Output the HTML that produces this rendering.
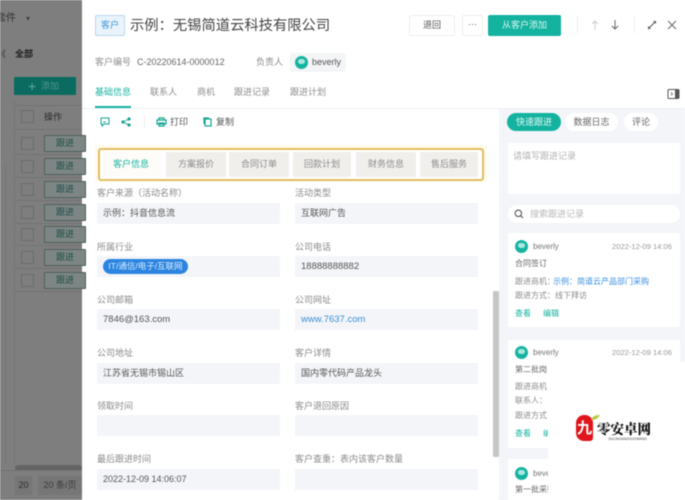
<!DOCTYPE html>
<html lang="zh"><head><meta charset="utf-8">
<style>
html,body{margin:0;padding:0;background:#fff}
#p{position:relative;width:685px;height:500px;overflow:hidden;background:#fff;font:9px/12px "Liberation Sans","Noto Sans CJK SC",sans-serif;color:#555;filter:blur(.45px)}
#p div,#p span.a,#p svg{position:absolute}
.t{white-space:nowrap}
.lab{color:#8a8a8a;font-size:9px;line-height:12px;white-space:nowrap}
.box{background:#f4f5f8;width:183px;height:21px;line-height:21px;text-indent:6px;color:#555;white-space:nowrap}
.tab{top:152px;height:25px;line-height:25px;background:#f1efec;text-align:center;color:#8b8b8b;width:60px}
.cb{left:21px;width:11px;height:11px;border:1px solid #6b6b6b}
.gb{left:44px;width:40px;height:15px;border:1px solid #4f5f5b;background:#7d8684;color:#1f4f48;text-align:center;line-height:15px;border-radius:1px}
.hl{background:#727272;left:15px;width:67px;height:1px}
.card{left:508px;width:172px;background:#fff;border-radius:2px}
.av{width:13px;height:13px;border-radius:50%;background:#14b3a0}
.av:after{content:"";position:absolute;left:3px;top:3px;width:7px;height:5px;border-radius:3px;background:#a9e6de}
.g{color:#8d8d8d}.teal{color:#14b3a0}
.dt{font-size:7.6px;color:#999}
.s{font-size:8px}
</style></head><body>
<div id="p">
<!-- dimmed left -->
<div style="left:0;top:0;width:82px;height:500px;background:#7e7e7e"></div>
<div style="left:5px;top:165px;width:1px;height:300px;background:#767676"></div>
<div style="left:14px;top:100px;width:1px;height:365px;background:#747474"></div>
<div class="t" style="left:-4px;top:13px;font-size:10px;color:#333">套件</div>
<div class="t" style="left:26px;top:13px;font-size:8px;color:#444">▾</div>
<div class="t" style="left:-3px;top:48px;color:#333;font-size:9px">《</div>
<div class="t" style="left:15px;top:48px;color:#1c1c1c;font-size:9px;font-weight:bold">全部</div>
<div style="left:14px;top:77px;width:62px;height:18px;background:#0b6b60;border-radius:1px"></div>
<div class="t" style="left:28px;top:79px;color:#5fa69d;font-size:14px;line-height:14px">+</div>
<div class="t" style="left:41px;top:80px;color:#52958c;font-size:9px">添加</div>
<div class="hl" style="top:105px"></div>
<div class="cb" style="top:110px"></div>
<div class="t" style="left:44px;top:111px;color:#2a2a2a;font-size:9px">操作</div>
<div class="hl" style="top:129px"></div>
<div class="cb" style="top:137px"></div><div class="gb" style="top:135px">跟进</div><div class="hl" style="top:154px"></div>
<div class="cb" style="top:160px"></div><div class="gb" style="top:158px">跟进</div><div class="hl" style="top:177px"></div>
<div class="cb" style="top:183px"></div><div class="gb" style="top:181px">跟进</div><div class="hl" style="top:200px"></div>
<div class="cb" style="top:206px"></div><div class="gb" style="top:204px">跟进</div><div class="hl" style="top:223px"></div>
<div class="cb" style="top:228px"></div><div class="gb" style="top:226px">跟进</div><div class="hl" style="top:245px"></div>
<div class="cb" style="top:251px"></div><div class="gb" style="top:249px">跟进</div><div class="hl" style="top:268px"></div>
<div class="cb" style="top:274px"></div><div class="gb" style="top:272px">跟进</div><div class="hl" style="top:291px"></div>
<div style="left:15px;top:465px;width:67px;height:6px;border-radius:3px;background:#646464"></div>
<div style="left:0;top:470px;width:82px;height:1px;background:#727272"></div>
<div style="left:15px;top:476px;width:17px;height:19px;background:#767676;text-align:center;line-height:19px;color:#2c2c2c">20</div>
<div style="left:38px;top:476px;width:44px;height:19px;background:#767676;text-align:center;line-height:19px;color:#3a3a3a" class="t">20 条/页</div>

<!-- header -->
<div style="left:95px;top:15px;width:28px;height:19px;background:#e9f3fb;border:1px solid #bcd9f0;border-radius:2px;text-align:center;line-height:19px;color:#3e94d8;font-size:9px">客户</div>
<div class="t" style="left:130px;top:17px;font-size:14.3px;line-height:18px;color:#444">示例&#xFF1A;无锡简道云科技有限公司</div>
<div style="left:409px;top:15px;width:44px;height:19px;border:1px solid #eee;border-radius:2px;text-align:center;line-height:19px;color:#555">退回</div>
<div style="left:462px;top:15px;width:19px;height:19px;border:1px solid #eee;border-radius:2px;text-align:center;line-height:17px;color:#555">···</div>
<div style="left:488px;top:15px;width:73px;height:21px;background:#14b3a0;border-radius:2px;text-align:center;line-height:21px;color:#dff6f3">从客户添加</div>
<div style="left:577px;top:16px;width:1px;height:17px;background:#eee"></div>
<div style="left:634px;top:16px;width:1px;height:17px;background:#eee"></div>
<svg style="left:589px;top:19px" width="12" height="12" viewBox="0 0 12 12" fill="none" stroke="#ccc" stroke-width="1"><path d="M6 11V2M3 5l3-3 3 3"/></svg>
<svg style="left:609px;top:19px" width="12" height="12" viewBox="0 0 12 12" fill="none" stroke="#666" stroke-width="1"><path d="M6 1v9M3 7l3 3 3-3"/></svg>
<svg style="left:647px;top:20px" width="10" height="10" viewBox="0 0 10 10" fill="none" stroke="#555" stroke-width="1"><path d="M2 8l6-6"/><path d="M6 1h3v3M1 6v3h3" fill="#555" stroke="none"/></svg>
<svg style="left:667px;top:20px" width="10" height="10" viewBox="0 0 10 10" fill="none" stroke="#666" stroke-width="1"><path d="M1 1l8 8M9 1l-8 8"/></svg>

<div class="t g" style="left:95px;top:56px;font-size:9px">客户编号</div>
<div class="t" style="left:137px;top:56px;font-size:9px;color:#666">C-20220614-0000012</div>
<div class="t g" style="left:256px;top:56px;font-size:9px">负责人</div>
<div style="left:290px;top:53px;width:56px;height:19px;border-radius:3px;background:#f3f5f7"></div>
<div class="av" style="left:295px;top:56px"></div>
<div class="t" style="left:312px;top:56px;font-size:9px;color:#555">beverly</div>

<!-- tabs -->
<div class="t teal" style="left:95px;top:86px">基础信息</div>
<div class="t g" style="left:150px;top:86px">联系人</div>
<div class="t g" style="left:197px;top:86px">商机</div>
<div class="t g" style="left:234px;top:86px">跟进记录</div>
<div class="t g" style="left:290px;top:86px">跟进计划</div>
<div style="left:82px;top:108px;width:603px;height:1px;background:#eef0f3"></div>
<div style="left:95px;top:106px;width:36px;height:2px;background:#14b3a0"></div>
<svg style="left:667px;top:88px" width="13" height="12" viewBox="0 0 13 12" fill="none" stroke="#555"><rect x="1" y="1.5" width="11" height="9" rx="1"/><path d="M4 4.5l1.5 1.5L4 7.5" stroke-width=".8"/><rect x="8" y="2" width="3.5" height="8" fill="#555" stroke="none"/></svg>

<!-- toolbar -->
<svg style="left:100px;top:117px" width="10" height="10" viewBox="0 0 10 10" fill="none" stroke="#14a593" stroke-width="1"><path d="M1 1h8v6H4L2 9V7H1zM3 5h3"/></svg>
<svg style="left:121px;top:117px" width="10" height="10" viewBox="0 0 10 10" fill="#14a593" stroke="#14a593" stroke-width=".8"><circle cx="2" cy="5" r="1.2"/><circle cx="8" cy="2" r="1.2"/><circle cx="8" cy="8" r="1.2"/><path d="M2 5l6-3M2 5l6 3" fill="none"/></svg>
<div style="left:144px;top:115px;width:1px;height:14px;background:#eee"></div>
<svg style="left:156px;top:117px" width="11" height="10" viewBox="0 0 11 10" fill="none" stroke="#14a593" stroke-width="1.2"><path d="M3 3V1h5v2M1 3h9v4H1zM3 6h5v3H3z"/></svg>
<div class="t" style="left:170px;top:116px;color:#555">打印</div>
<svg style="left:203px;top:117px" width="9" height="10" viewBox="0 0 9 10" fill="none" stroke="#14a593" stroke-width="1.2"><rect x="2" y="2" width="6" height="7"/><path d="M1 7V1h5"/></svg>
<div class="t" style="left:216px;top:116px;color:#555">复制</div>

<!-- section tabs -->
<div style="left:95px;top:145px;width:392px;height:37px;background:#fffbea"></div>
<div style="left:98px;top:148px;width:382px;height:29px;border:2px solid #e3bc62;border-radius:3px;background:#fff"></div>
<div class="tab teal" style="left:101px;background:#fdfcf9">客户信息</div>
<div class="tab" style="left:166px">方案报价</div>
<div class="tab" style="left:229px">合同订单</div>
<div class="tab" style="left:293px;width:58px">回款计划</div>
<div class="tab" style="left:356px">财务信息</div>
<div class="tab" style="left:420px;width:58px">售后服务</div>

<!-- form -->
<div class="lab" style="left:97px;top:187px">客户来源&#xFF08;活动名称&#xFF09;</div>
<div class="box" style="left:97px;top:203px">示例&#xFF1A;抖音信息流</div>
<div class="lab" style="left:295px;top:187px">活动类型</div>
<div class="box" style="left:295px;top:203px">互联网广告</div>

<div class="lab" style="left:97px;top:241px">所属行业</div>
<div class="box" style="left:97px;top:256px"></div>
<div style="left:103px;top:259px;width:85px;height:15px;border-radius:8px;background:#2a84e0;color:#dcecfb;text-align:center;line-height:15px;font-size:8.5px" class="t">IT/通信/电子/互联网</div>
<div class="lab" style="left:295px;top:241px">公司电话</div>
<div class="box" style="left:295px;top:256px;font-size:9.5px">18888888882</div>

<div class="lab" style="left:97px;top:294px">公司邮箱</div>
<div class="box" style="left:97px;top:309px;font-size:9.5px">7846@163.com</div>
<div class="lab" style="left:295px;top:294px">公司网址</div>
<div class="box" style="left:295px;top:309px;font-size:9.5px;color:#3b8fd0">www.7637.com</div>

<div class="lab" style="left:97px;top:347px">公司地址</div>
<div class="box" style="left:97px;top:363px">江苏省无锡市锡山区</div>
<div class="lab" style="left:295px;top:347px">客户详情</div>
<div class="box" style="left:295px;top:363px">国内零代码产品龙头</div>

<div class="lab" style="left:97px;top:400px">领取时间</div>
<div class="box" style="left:97px;top:415px"></div>
<div class="lab" style="left:295px;top:400px">客户退回原因</div>
<div class="box" style="left:295px;top:415px"></div>

<div class="lab" style="left:97px;top:453px">最后跟进时间</div>
<div class="box" style="left:97px;top:469px;font-size:9px">2022-12-09 14:06:07</div>
<div class="lab" style="left:295px;top:453px">客户查重&#xFF1A;表内该客户数量</div>
<div class="box" style="left:295px;top:469px"></div>

<div style="left:493px;top:291px;width:6px;height:166px;background:#c6c6c6;border-radius:1px"></div>

<!-- right panel -->
<div style="left:499px;top:109px;width:186px;height:391px;background:#f3f5f9"></div>
<div style="left:507px;top:113px;width:54px;height:18px;border-radius:9px;background:#14b3a0;color:#e2f7f4;text-align:center;line-height:18px">快速跟进</div>
<div style="left:565px;top:113px;width:53px;height:18px;border-radius:9px;background:#fff;color:#666;text-align:center;line-height:18px">数据日志</div>
<div style="left:624px;top:113px;width:34px;height:18px;border-radius:9px;background:#fff;color:#666;text-align:center;line-height:18px">评论</div>
<div style="left:508px;top:143px;width:172px;height:51px;background:#fff;border-radius:2px"></div>
<div class="t" style="left:513px;top:150px;color:#b2b2b2">请填写跟进记录</div>
<div style="left:508px;top:205px;width:172px;height:18px;background:#fff;border-radius:9px"></div>
<svg style="left:514px;top:209px" width="10" height="10" viewBox="0 0 10 10" fill="none" stroke="#555" stroke-width="1.1"><circle cx="4.3" cy="4.3" r="3.2"/><path d="M6.7 6.7L9 9"/></svg>
<div class="t" style="left:530px;top:208px;color:#b8b8b8">搜索跟进记录</div>

<div class="card" style="top:233px;height:94px"></div>
<div class="av" style="left:515px;top:240px"></div>
<div class="t" style="left:533px;top:241px;font-size:8px;color:#777">beverly</div>
<div class="t dt" style="left:612px;top:241px">2022-12-09 14:06</div>
<div class="t s" style="left:515px;top:258px;color:#666">合同签订</div>
<div class="t g s" style="left:515px;top:276px">跟进商机&#xFF1A;</div>
<div class="t s" style="left:553px;top:276px;color:#3b8fe0">示例&#xFF1A;简道云产品部门采购</div>
<div class="t g s" style="left:515px;top:290px">跟进方式&#xFF1A;线下拜访</div>
<div class="t teal s" style="left:515px;top:308px">查看</div>
<div class="t teal s" style="left:543px;top:308px">编辑</div>

<div class="card" style="top:340px;height:108px"></div>
<div class="av" style="left:515px;top:346px"></div>
<div class="t" style="left:533px;top:347px;font-size:8px;color:#777">beverly</div>
<div class="t dt" style="left:612px;top:347px">2022-12-09 14:06</div>
<div class="t s" style="left:515px;top:364px;color:#666">第二批岗</div>
<div class="t g s" style="left:515px;top:381px">跟进商机&#xFF1A;</div>
<div class="t g s" style="left:515px;top:395px">联系人&#xFF1A;</div>
<div class="t g s" style="left:515px;top:410px">跟进方式&#xFF1A;</div>
<div class="t teal s" style="left:515px;top:428px">查看</div>
<div class="t teal s" style="left:543px;top:428px">编辑</div>

<div class="card" style="top:459px;height:41px"></div>
<div class="av" style="left:515px;top:467px"></div>
<div class="t" style="left:533px;top:468px;font-size:8px;color:#777">beverly</div>
<div class="t s" style="left:515px;top:484px;color:#666">第一批采购</div>

<!-- watermark -->
<div style="left:548px;top:362px;width:137px;height:138px;background:#fff"></div>
<div style="left:576px;top:415px;width:17px;height:26px;background:#e0151b;border-radius:8px 8px 3px 8px"></div>
<svg style="left:591px;top:414px" width="9" height="7" viewBox="0 0 9 7"><path d="M0 6C1 2 5 1 9 1 7 5 4 6 0 6z" fill="#b9c94a"/></svg>
<div class="t" style="left:577px;top:420px;font-size:15px;line-height:17px;color:#fff;font-weight:bold">九</div>
<div class="t" style="left:597px;top:421px;font-family:'Noto Serif CJK SC','Liberation Serif',serif;font-size:13.5px;line-height:15px;font-weight:900;color:#111">零安卓网</div>
<div class="t" style="left:608px;top:437px;font-size:3.5px;line-height:4px;color:#444">JIULINGANZHUOWANG</div>
</div>
</body></html>
